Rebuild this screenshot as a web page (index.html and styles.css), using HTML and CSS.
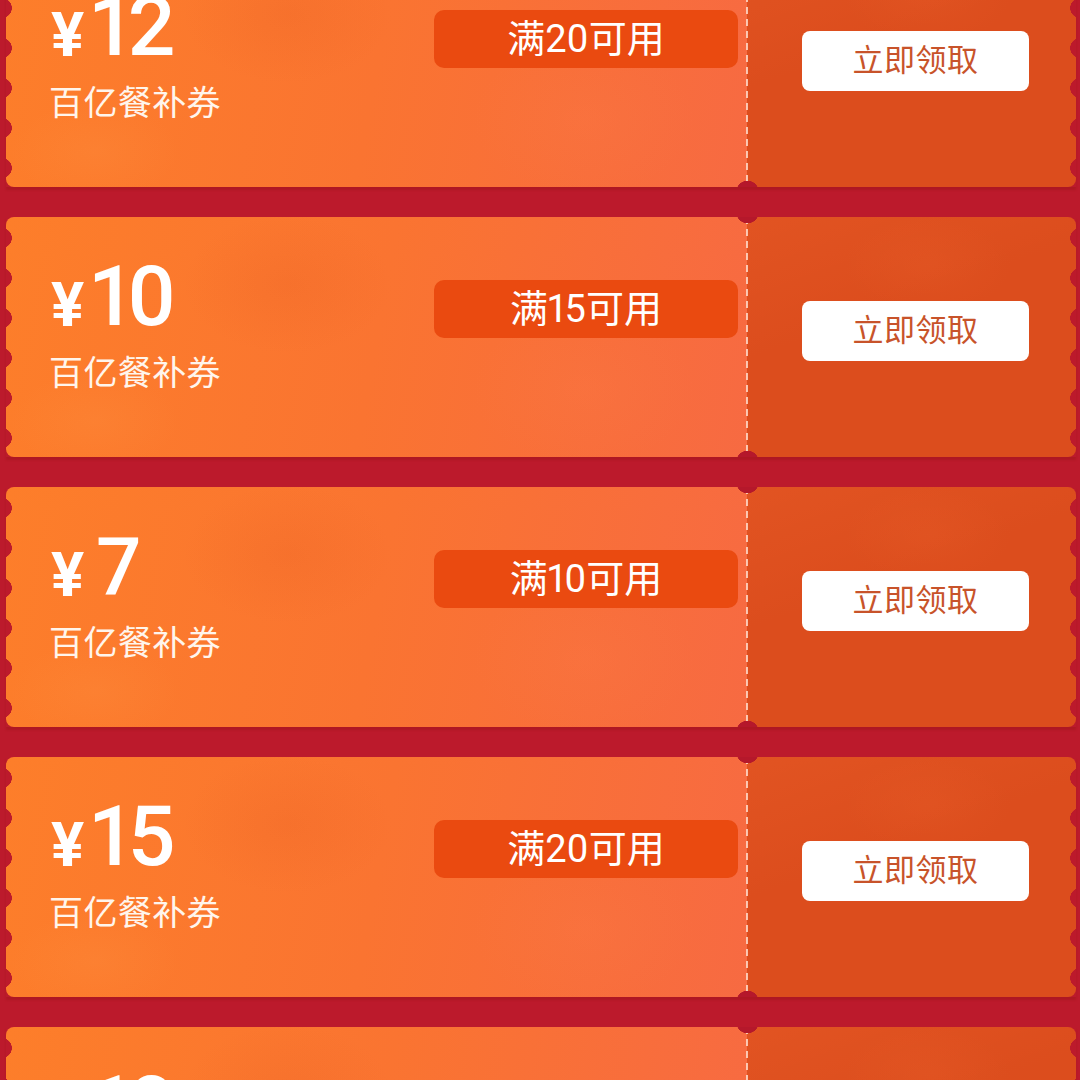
FILE: index.html
```html
<!DOCTYPE html>
<html lang="zh-CN">
<head>
    <meta charset="UTF-8">
    <meta name="viewport" content="width=device-width, initial-scale=1.0">
    <title>百亿餐补券</title>
    <link rel="stylesheet" href="styles.css">
</head>
<body>
    <main class="coupon-list">
        <section class="coupon">
            <div class="coupon-left">
                <div class="coupon-info">
                    <p class="amount"><span class="currency">¥</span><span class="value">12</span></p>
                    <p class="coupon-name">百亿餐补券</p>
                </div>
                <div class="condition">满20可用</div>
            </div>
            <div class="coupon-right"><button class="claim">立即领取</button></div>
        </section>
        <section class="coupon">
            <div class="coupon-left">
                <div class="coupon-info">
                    <p class="amount"><span class="currency">¥</span><span class="value">10</span></p>
                    <p class="coupon-name">百亿餐补券</p>
                </div>
                <div class="condition">满15可用</div>
            </div>
            <div class="coupon-right"><button class="claim">立即领取</button></div>
        </section>
        <section class="coupon">
            <div class="coupon-left">
                <div class="coupon-info">
                    <p class="amount"><span class="currency">¥</span><span class="value value-single">7</span></p>
                    <p class="coupon-name">百亿餐补券</p>
                </div>
                <div class="condition">满10可用</div>
            </div>
            <div class="coupon-right"><button class="claim">立即领取</button></div>
        </section>
        <section class="coupon">
            <div class="coupon-left">
                <div class="coupon-info">
                    <p class="amount"><span class="currency">¥</span><span class="value">15</span></p>
                    <p class="coupon-name">百亿餐补券</p>
                </div>
                <div class="condition">满20可用</div>
            </div>
            <div class="coupon-right"><button class="claim">立即领取</button></div>
        </section>
        <section class="coupon">
            <div class="coupon-left">
                <div class="coupon-info">
                    <p class="amount"><span class="currency">¥</span><span class="value">10</span></p>
                    <p class="coupon-name">百亿餐补券</p>
                </div>
                <div class="condition">满15可用</div>
            </div>
            <div class="coupon-right"><button class="claim">立即领取</button></div>
        </section>
    </main>
</body>
</html>
```

FILE: styles.css
```css
html, body {
    margin: 0;
    padding: 0;
    height: 1080px;
    overflow: hidden;
    background-color: #bc1a2c;
    font-family: Roboto, "Noto Sans CJK SC", sans-serif;
}
p {
    margin: 0;
}
.coupon-list {
    display: flex;
    flex-direction: column;
    gap: 30px;
    margin-top: -53px;
    padding: 0 4px 0 6px;
}
.coupon {
    position: relative;
    display: flex;
    flex: none;
    height: 240px;
    box-shadow: 0 3px 2px rgba(150, 20, 20, 0.35);
}
/* scalloped edges */
.coupon::before,
.coupon::after {
    content: "";
    position: absolute;
    z-index: 2;
    top: 0;
    bottom: 0;
    width: 8px;
    background-size: 8px 40px;
    background-repeat: repeat-y;
    background-position: 0 1px;
}
.coupon::before {
    left: 0;
    background-image: radial-gradient(circle 10px at -4px 20px, #bc1a2c 96%, transparent 100%);
}
.coupon::after {
    right: 0;
    background-image: radial-gradient(circle 10px at 12px 20px, #bc1a2c 96%, transparent 100%);
}
.coupon-left {
    position: relative;
    display: flex;
    justify-content: space-between;
    box-sizing: border-box;
    width: 741px;
    padding: 63px 9px 0 45px;
    border-radius: 8px 0 0 8px;
    background:
        radial-gradient(ellipse 150px 100px at 38% 28%, rgba(225, 85, 30, 0.16), transparent 70%),
        radial-gradient(ellipse 120px 70px at 12% 85%, rgba(255, 160, 80, 0.14), transparent 70%),
        radial-gradient(ellipse 160px 110px at 78% 72%, rgba(255, 140, 90, 0.1), transparent 70%),
        linear-gradient(100deg, #fd7e2a 0%, #fa7431 50%, #f76a42 100%);
}
/* dashed divider */
.coupon-left::after {
    content: "";
    position: absolute;
    top: 0;
    right: -1px;
    bottom: 0;
    width: 2px;
    z-index: 1;
    background-image: repeating-linear-gradient(to bottom, rgba(255, 225, 210, 0.8) 0 7px, transparent 7px 12px);
}
/* half round notches where the divider meets the gaps */
.coupon-left::before {
    content: "";
    position: absolute;
    z-index: 2;
    top: 0;
    right: -12px;
    bottom: 0;
    width: 23px;
    background:
        radial-gradient(circle 11.5px at 50% -5px, #b5182b 96%, transparent 100%),
        radial-gradient(circle 11.5px at 50% 245px, #b5182b 96%, transparent 100%);
}
.coupon-right {
    display: flex;
    flex: 1;
    justify-content: center;
    align-items: center;
    padding-bottom: 12px;
    box-sizing: border-box;
    border-radius: 0 8px 8px 0;
    background:
        linear-gradient(160deg, rgba(255, 120, 60, 0.16), transparent 40%),
        radial-gradient(ellipse 120px 70px at 55% 20%, rgba(255, 120, 60, 0.1), transparent 70%),
        #dc4d1d;
}
.coupon-info {
    display: flex;
    flex-direction: column;
    margin-top: -24px;
}
.amount {
    display: flex;
    align-items: flex-end;
    height: 84px;
    color: #fff;
}
.currency {
    width: 37px;
    margin-bottom: -3px;
    font-size: 62px;
    font-weight: 700;
    line-height: 76px;
}
.value {
    margin-bottom: 5px;
    font-size: 84px;
    font-weight: 500;
    letter-spacing: -8px;
    line-height: 76px;
}
.value-single {
    margin-left: 8px;
    font-size: 80px;
}
.coupon-name {
    margin-top: 9px;
    margin-left: -2px;
    color: #fff5ec;
    font-size: 34px;
    letter-spacing: 0.4px;
    line-height: 48px;
}
.condition {
    width: 304px;
    height: 58px;
    border-radius: 10px;
    background-color: #ea4a10;
    color: #fff;
    font-size: 38px;
    font-variant-numeric: proportional-nums;
    line-height: 58px;
    text-align: center;
}
.claim {
    width: 227px;
    height: 60px;
    margin-left: 8px;
    padding: 0 0 7px;
    border: none;
    border-radius: 8px;
    background-color: #fff;
    color: #c8532a;
    font-family: inherit;
    font-size: 31px;
    letter-spacing: 0.5px;
}
```
